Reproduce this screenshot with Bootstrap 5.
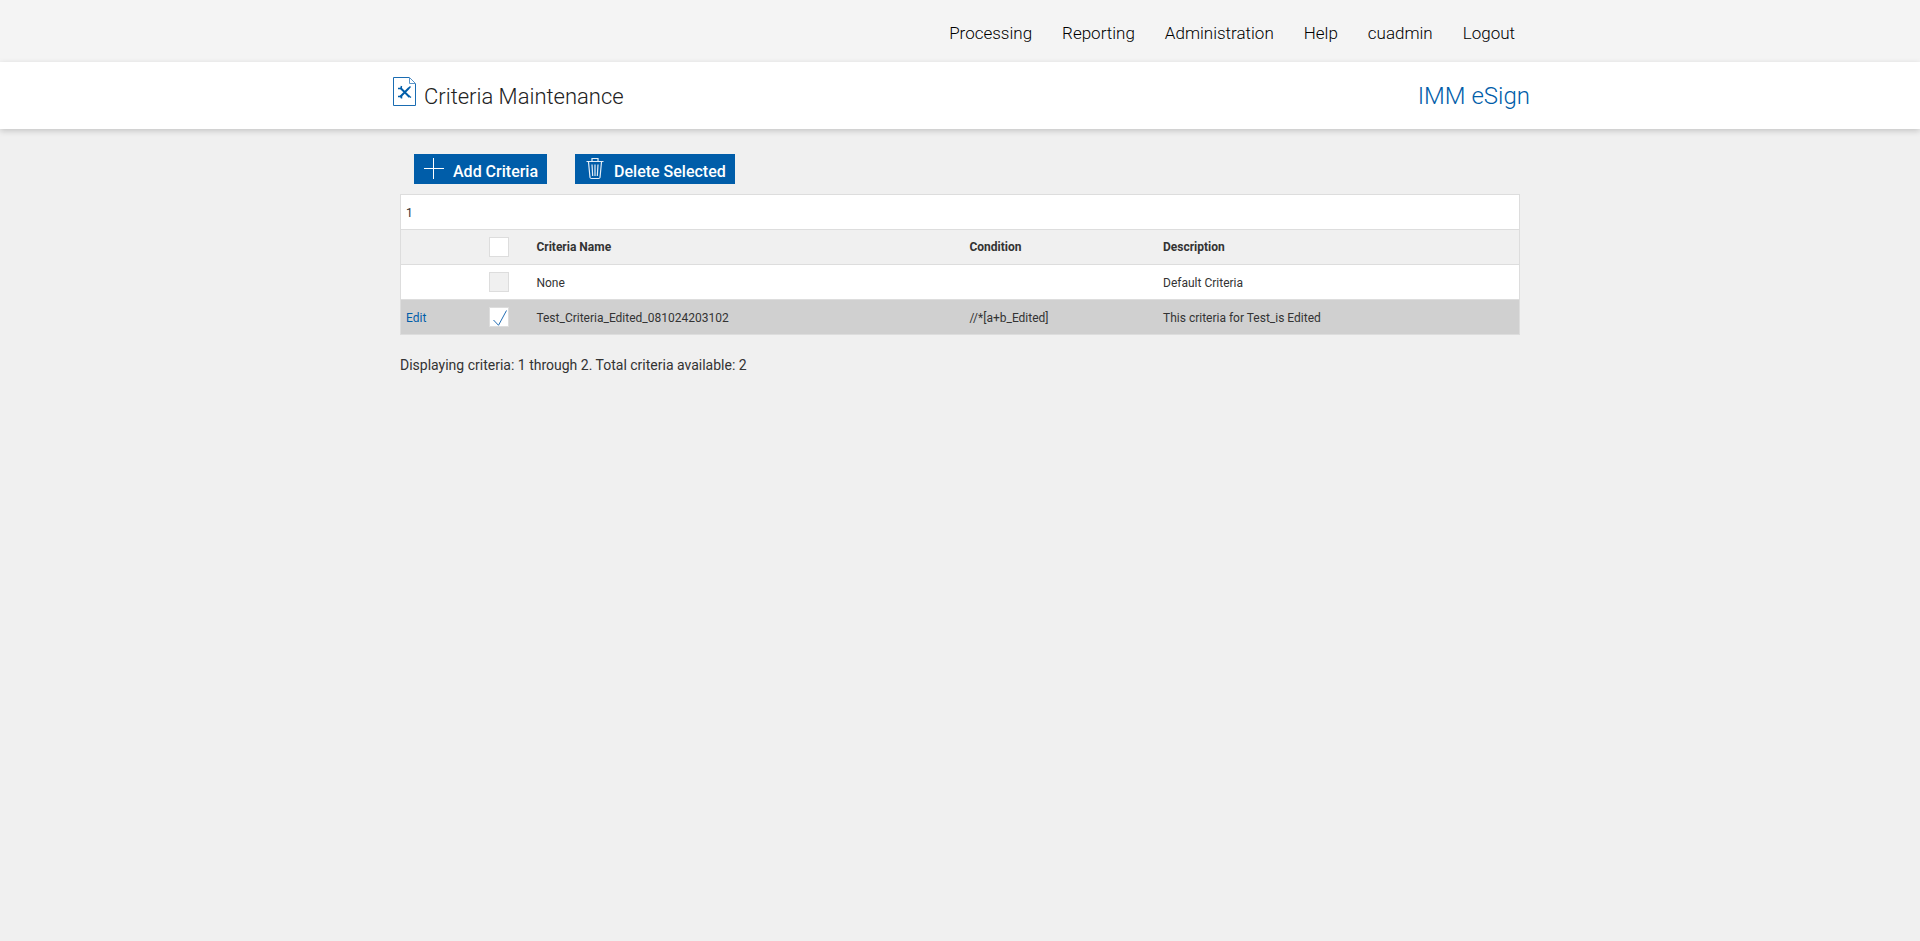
<!DOCTYPE html>
<html lang="en">
<head>
<meta charset="utf-8">
<meta name="viewport" content="width=device-width, initial-scale=1">
<title>Criteria Maintenance</title>
<link href="https://cdn.jsdelivr.net/npm/bootstrap@5.3.0/dist/css/bootstrap.min.css" rel="stylesheet">
<style>
  body { background: #f0f0f0; color: #333; font-family: Roboto, "Liberation Sans", sans-serif; font-size: 14px; line-height: 20px; }
  .page-wrap { max-width: 1140px; margin: 0 auto; padding: 0 10px; }
  .site-nav { background: #f4f4f4; padding: 19px 0 15px; }
  .site-nav .page-wrap { padding-right: 0; }
  .site-nav .nav-link { color: #000; font-size: 17px; font-weight: 300; line-height: 28px; padding: 0 15px; }
  .title-bar { background: #fff; box-shadow: 0 2px 6px rgba(0,0,0,.18); padding: 15px 0 12px; }
  .title-bar .page-wrap { padding: 0 0 0 3px; }
  .title-bar h1 { font-size: 22px; font-weight: 300; line-height: 40px; color: #222; }
  .product-name { font-size: 24px; font-weight: 300; line-height: 38px; color: #005da9; text-decoration: none; }
  .tools { gap: 28px; padding: 25px 14px 10px; }
  .btn-tool { --bs-btn-color: #fff; --bs-btn-bg: #005da9; --bs-btn-hover-color: #fff; --bs-btn-hover-bg: #004b88; --bs-btn-border-width: 0; --bs-btn-border-radius: 0; --bs-btn-font-weight: 500; --bs-btn-font-size: 16px; --bs-btn-line-height: 22px; --bs-btn-padding-x: 9px; --bs-btn-padding-y: 0; gap: 8px; height: 30px; }
  .btn-tool span { padding-top: 6px; }
  .criteria-grid { --bs-table-bg: transparent; color: #333; font-size: 12px; line-height: 16px; table-layout: fixed; border: 1px solid #ddd; margin-bottom: 20px; }
  .criteria-grid td, .criteria-grid th { height: 35px; padding: 2px 5px 0; border-bottom: 1px solid #ddd; color: #333; vertical-align: middle; }
  .criteria-grid th { padding-top: 0; }
  .criteria-grid tr { background: #fff; }
  .criteria-grid tr.heading-row { background: #f0f0f0; }
  .criteria-grid tr.chosen { background: #d0d0d0; }
  .criteria-grid a { color: #005da9; text-decoration: none; }
  .criteria-grid .pick { padding: 0 5px; }
  .tick.form-check-input[type=checkbox] { width: 20px; height: 20px; margin: 0; float: none; display: block; border: 1px solid #ddd; border-radius: 0; background-color: #fff; }
  .tick.form-check-input[type=checkbox]:checked { background-size: 18px 18px; background-image: url("data:image/svg+xml,%3csvg xmlns='http://www.w3.org/2000/svg' viewBox='0 0 18 18'%3e%3cpath d='M3.5 12l5 5.3L16.5 2.500' fill='none' stroke='%23246eb4' stroke-width='1'/%3e%3c/svg%3e"); }
  .tick.form-check-input[type=checkbox]:disabled { background-color: #f0f0f0; opacity: 1; }
</style>
<script src="https://cdn.jsdelivr.net/npm/bootstrap@5.3.0/dist/js/bootstrap.bundle.min.js"></script>
</head>
<body>
<nav class="site-nav" aria-label="Main">
  <div class="page-wrap">
    <ul class="nav justify-content-end">
      <li class="nav-item"><a class="nav-link" href="#">Processing</a></li>
      <li class="nav-item"><a class="nav-link" href="#">Reporting</a></li>
      <li class="nav-item"><a class="nav-link" href="#">Administration</a></li>
      <li class="nav-item"><a class="nav-link" href="#">Help</a></li>
      <li class="nav-item"><a class="nav-link" href="#">cuadmin</a></li>
      <li class="nav-item"><a class="nav-link" href="#">Logout</a></li>
    </ul>
  </div>
</nav>
<header class="title-bar">
  <div class="page-wrap d-flex justify-content-between align-items-start">
    <div class="d-flex align-items-start gap-2">
      <svg width="23" height="29" viewBox="0 0 23 29" fill="none" stroke="#1a6cb2" aria-hidden="true">
        <path d="M16.500 .5H.5V28.500H22.500V6.500"/>
        <path d="M16.500 .5V6.500H22.500L16.500 .5" stroke="#5a94c8"/>
        <path d="M7.500 11l9 9M16 11l-9 9" stroke="#005da9" stroke-width="2"/>
        <path d="M5 11.500h3l.5-2.500M5 19.500h3.500v2M17.500 9.500l-2 2M15 18.500l3 2" stroke="#005da9" stroke-width="1.500"/>
      </svg>
      <h1 class="m-0">Criteria Maintenance</h1>
    </div>
    <a class="product-name" href="#">IMM eSign</a>
  </div>
</header>
<main class="page-wrap">
  <div class="d-flex tools">
    <button type="button" class="btn btn-tool d-flex align-items-center">
      <svg width="22" height="22" viewBox="0 0 22 22" stroke="#fff" aria-hidden="true"><path d="M1 10.500H21M10.500 0V21"/></svg>
      <span>Add Criteria</span>
    </button>
    <button type="button" class="btn btn-tool d-flex align-items-center">
      <svg width="22" height="22" viewBox="0 0 22 22" fill="none" stroke="#e4eef7" aria-hidden="true">
        <path d="M2.500 3.500H19.500M4.500 4L6 19.500Q6.200 20.500 7.500 20.500H14.500Q15.800 20.500 16 19.500L17.500 4M8 3V.5H14V3M8 6.500L8.700 18M11 6.500V18M14 6.500L13.300 18" stroke-width="1.200"/>
      </svg>
      <span>Delete Selected</span>
    </button>
  </div>
  <table class="table criteria-grid">
    <colgroup><col style="width:7.500%"><col style="width:4.200%"><col style="width:38.700%"><col style="width:17.300%"><col></colgroup>
    <tbody>
      <tr><td colspan="5">1</td></tr>
      <tr class="heading-row">
        <td></td>
        <td class="pick"><input class="form-check-input tick" type="checkbox" aria-label="Select all"></td>
        <th scope="col">Criteria Name</th><th scope="col">Condition</th><th scope="col">Description</th>
      </tr>
      <tr>
        <td></td>
        <td class="pick"><input class="form-check-input tick" type="checkbox" disabled aria-label="Select None"></td>
        <td>None</td><td></td><td>Default Criteria</td>
      </tr>
      <tr class="chosen">
        <td><a href="#">Edit</a></td>
        <td class="pick"><input class="form-check-input tick" type="checkbox" checked aria-label="Select Test_Criteria_Edited_081024203102"></td>
        <td>Test_Criteria_Edited_081024203102</td><td>//*[a+b_Edited]</td><td>This criteria for Test_is Edited</td>
      </tr>
    </tbody>
  </table>
  <p>Displaying criteria: 1 through 2. Total criteria available: 2</p>
</main>
</body>
</html>
